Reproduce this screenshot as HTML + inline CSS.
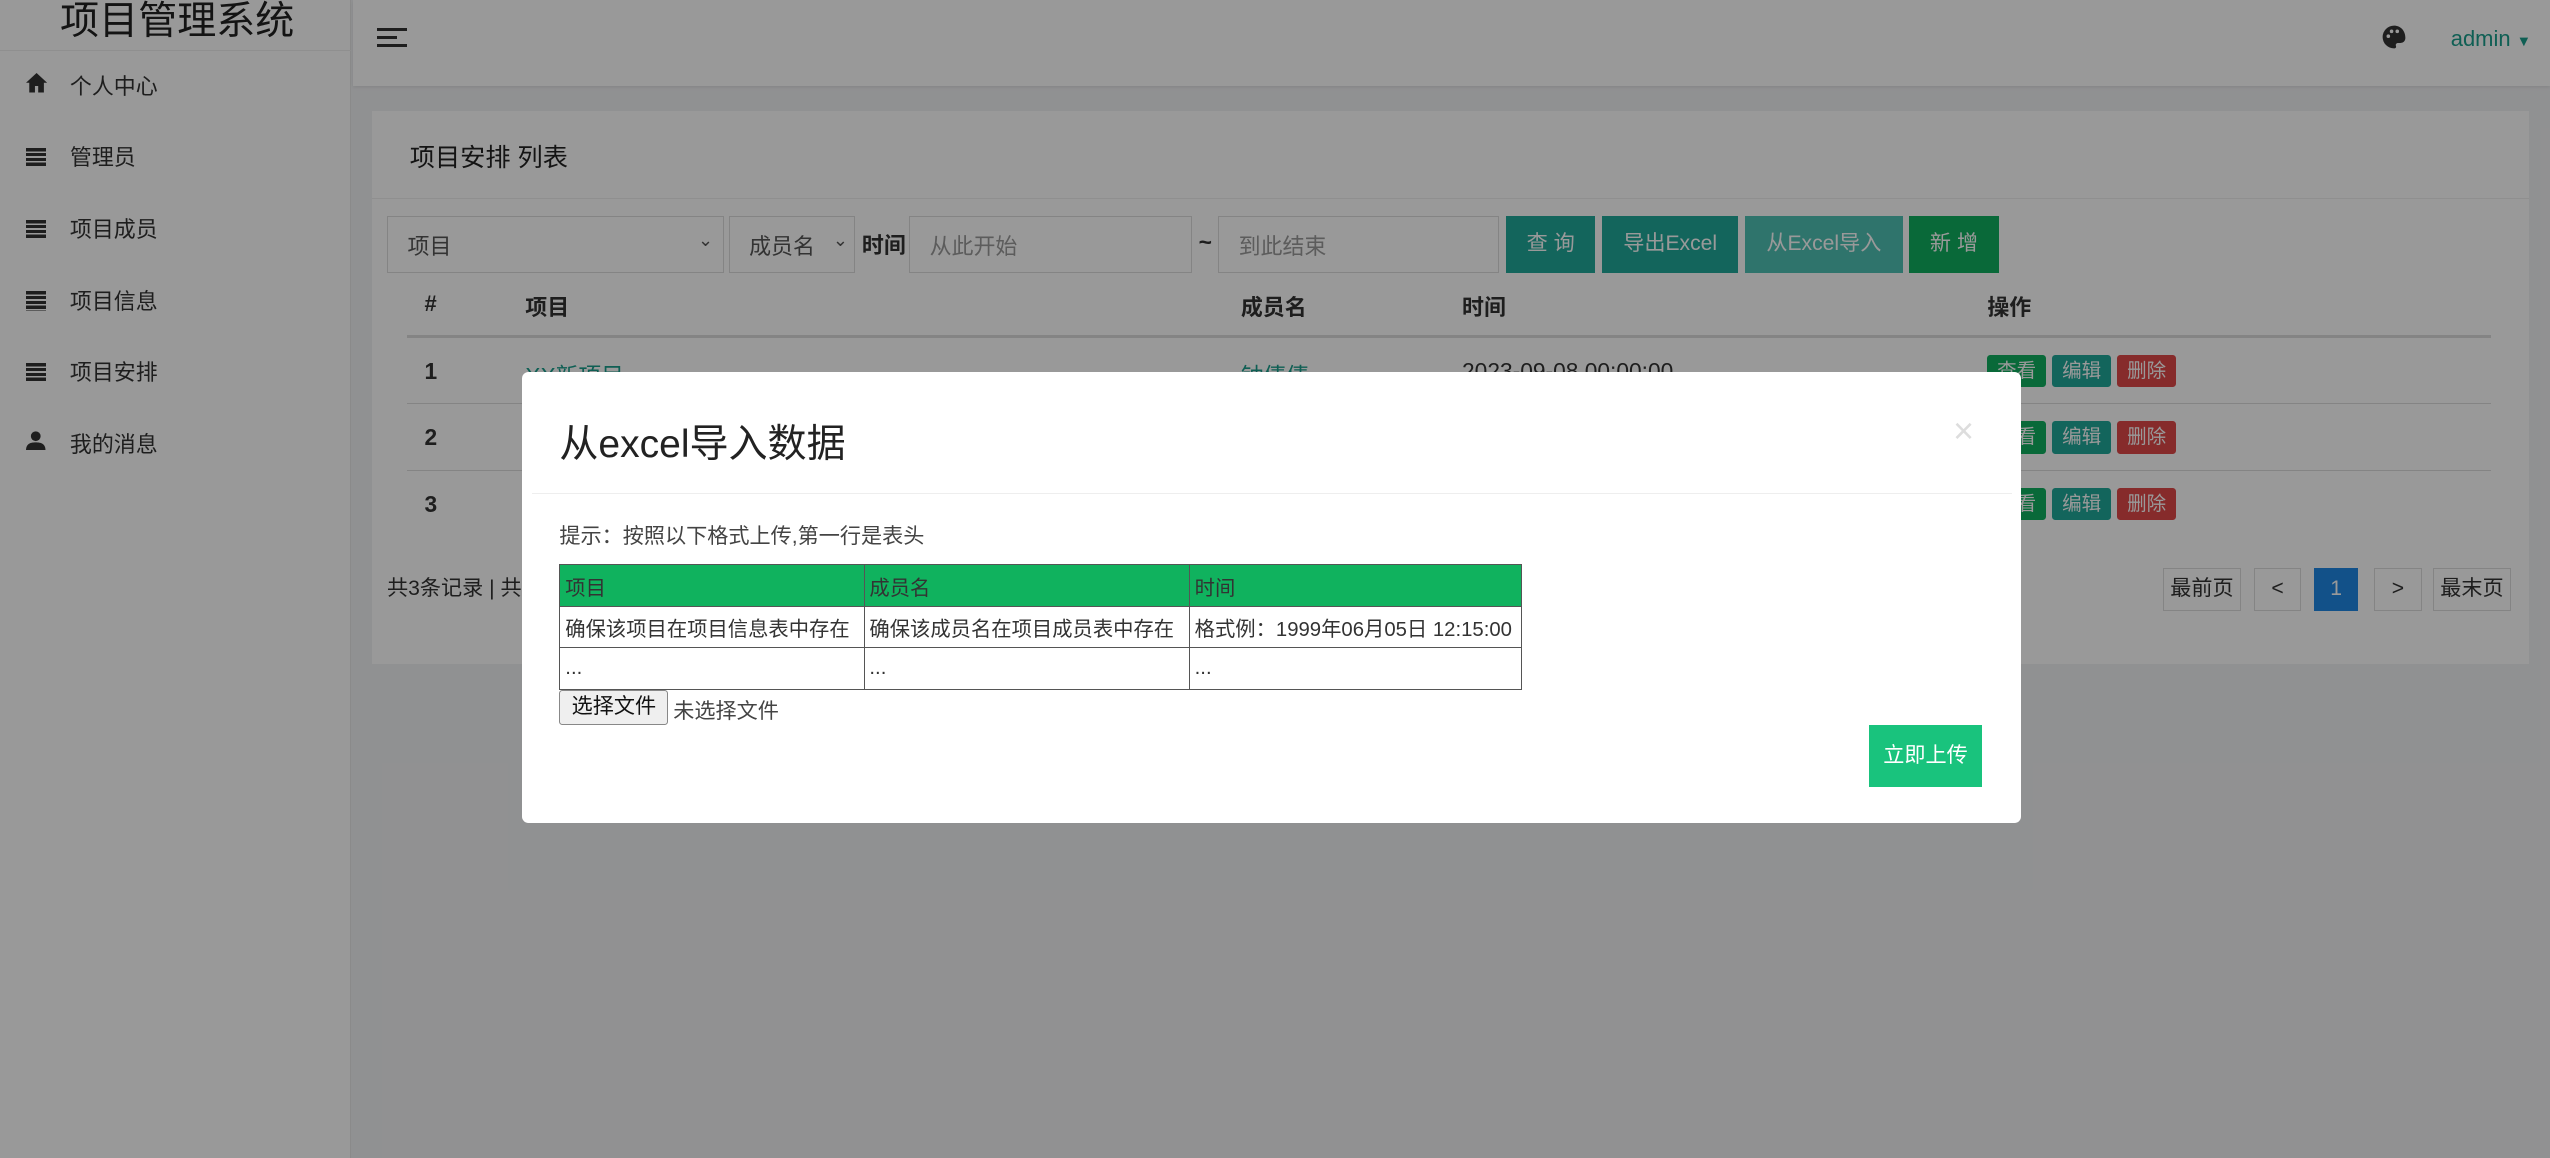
<!DOCTYPE html>
<html><head><meta charset="utf-8"><style>
*{box-sizing:border-box;margin:0;padding:0}
html,body{width:2550px;height:1158px;overflow:hidden;background:#f1f2f4}
#root{zoom:1.62628;width:1568px;height:712px;position:relative;font-family:"Liberation Sans","Noto Sans CJK SC",sans-serif;color:#333;font-size:14px}
.side{position:absolute;left:0;top:0;width:216px;height:712px;background:#fff;border-right:1px solid #e6e6e6}
.side .t{position:absolute;left:37px;top:-6px;font-size:24px;color:#222}
.side .hr{position:absolute;left:0;top:31px;width:216px;border-top:1px solid #eee}
.mi{position:absolute;left:0;width:216px;height:20px;font-size:13.5px}
.mi span{position:absolute;left:43px;top:0}
.mi i{position:absolute;left:16px;top:4px;width:12px;height:12px}
.lines{background:repeating-linear-gradient(#333 0 2px,transparent 2px 3px)}
.top{position:absolute;left:217px;top:0;width:1351px;height:53px;background:#fff;box-shadow:0 1px 2px rgba(0,0,0,.08)}
.card{position:absolute;left:229px;top:68px;width:1326px;height:340px;background:#fff}
.abs{position:absolute}
.inp{position:absolute;border:1px solid #ddd;height:35px;top:133px;color:#999;padding:8px 0 0 12px;font-size:13.5px;background:#fff}
.btn{position:absolute;top:133px;height:35px;color:#fff;font-size:13px;text-align:center;line-height:35px}
.th{position:absolute;top:179px;font-weight:bold;font-size:13.5px;color:#333}
.sb{position:absolute;width:36px;height:20px;color:#fff;font-size:12px;text-align:center;line-height:20px;border-radius:2px}
.pg{position:absolute;top:349px;height:27px;border:1px solid #ddd;font-size:13px;text-align:center;line-height:25px;background:#fff}
.ov{position:absolute;left:0;top:0;width:1568px;height:712px;background:rgba(0,0,0,.4)}
.modal{position:absolute;left:321px;top:229px;width:922px;height:277px;background:#fff;border-radius:4px}
table{border-collapse:collapse;position:absolute;left:23px;top:118px;font-size:12.5px;color:#333;table-layout:fixed;width:591px}
td{border:1px solid #555;height:25.5px;padding:0 3px;white-space:nowrap;overflow:hidden}
</style></head><body><div id="root">
<div class="side">
<div class="t">项目管理系统</div>
<div class="hr"></div>
<div class="mi" style="top:43px"><svg class="abs" style="left:16px;top:2px" width="13" height="12" viewBox="0 0 13 12"><path d="M6.5 0L0 6h2v6h3.5V8h2v4H11V6h2z" fill="#333"/></svg><span>个人中心</span></div>
<div class="mi" style="top:87px"><i class="lines"></i><span>管理员</span></div>
<div class="mi" style="top:131px"><i class="lines"></i><span>项目成员</span></div>
<div class="mi" style="top:175px"><i class="lines"></i><span>项目信息</span></div>
<div class="mi" style="top:219px"><i class="lines"></i><span>项目安排</span></div>
<div class="mi" style="top:263px"><svg class="abs" style="left:16px;top:2px" width="12" height="12" viewBox="0 0 12 12"><circle cx="6" cy="3.2" r="3" fill="#333"/><path d="M0 12c0-4 2.5-5 6-5s6 1 6 5z" fill="#333"/></svg><span>我的消息</span></div>
</div>
<div class="top">
<div class="abs" style="left:15px;top:17px;width:18px;height:12px;border-top:2px solid #333;border-bottom:2px solid #333"><div style="margin-top:3px;width:12px;border-top:2px solid #333"></div></div>
<svg class="abs" style="left:1247px;top:15px" width="16" height="16" viewBox="0 0 16 16"><path d="M8 1a7 7 0 000 14c1 0 1.5-.6 1.2-1.5-.4-1 .3-1.8 1.3-1.8H12a3 3 0 003-3C15 4 12 1 8 1z" fill="#333"/><circle cx="4.5" cy="7.5" r="1.1" fill="#fff"/><circle cx="6.5" cy="4.5" r="1.1" fill="#fff"/><circle cx="10" cy="4.5" r="1.1" fill="#fff"/></svg>
<div class="abs" style="left:1290px;top:16px;color:#1a9e8c;font-size:13.5px">admin <span style="font-size:9px">▼</span></div>
</div>
<div class="card">
<div class="abs" style="left:23px;top:17px;font-size:15.5px;color:#222">项目安排 列表</div>
<div class="abs" style="left:0;top:54px;width:1326px;border-top:1px solid #eee"></div>
</div>
<div class="inp" style="left:238px;width:207px;color:#555">项目<span class="abs" style="right:6px;top:8px;font-size:11px">⌄</span></div>
<div class="inp" style="left:448px;width:78px;color:#555">成员名<span class="abs" style="right:4px;top:8px;font-size:11px">⌄</span></div>
<div class="abs" style="left:530px;top:141px;font-weight:bold;font-size:13.5px">时间</div>
<div class="inp" style="left:559px;width:174px">从此开始</div>
<div class="abs" style="left:737px;top:141px;font-weight:bold">~</div>
<div class="inp" style="left:749px;width:173px">到此结束</div>
<div class="btn" style="left:926px;width:55px;background:#21a89a">查 询</div>
<div class="btn" style="left:985px;width:84px;background:#21a89a">导出Excel</div>
<div class="btn" style="left:1073px;width:97px;background:#4fc1b5">从Excel导入</div>
<div class="btn" style="left:1174px;width:55px;background:#0fb05f">新 增</div>
<div class="th" style="left:261px">#</div><div class="th" style="left:323px">项目</div><div class="th" style="left:763px">成员名</div><div class="th" style="left:899px">时间</div><div class="th" style="left:1222px">操作</div>
<div class="abs" style="left:250px;top:206px;width:1282px;border-top:2px solid #ddd"></div>
<div class="abs" style="left:250px;top:248px;width:1282px;border-top:1px solid #ddd"></div>
<div class="abs" style="left:250px;top:289px;width:1282px;border-top:1px solid #ddd"></div>
<div class="abs" style="left:261px;top:220px;font-weight:bold">1</div>
<div class="abs" style="left:261px;top:261px;font-weight:bold">2</div>
<div class="abs" style="left:261px;top:302px;font-weight:bold">3</div>
<div class="abs" style="left:323px;top:220px;color:#1a9e8c">XX新项目</div>
<div class="abs" style="left:763px;top:220px;color:#1a9e8c">钟倩倩</div>
<div class="abs" style="left:899px;top:220px">2023-09-08 00:00:00</div>
<div class="sb" style="left:1222px;top:218px;background:#0fb05f">查看</div><div class="sb" style="left:1262px;top:218px;background:#21a89a">编辑</div><div class="sb" style="left:1302px;top:218px;background:#e04848">删除</div>
<div class="sb" style="left:1222px;top:259px;background:#0fb05f">查看</div><div class="sb" style="left:1262px;top:259px;background:#21a89a">编辑</div><div class="sb" style="left:1302px;top:259px;background:#e04848">删除</div>
<div class="sb" style="left:1222px;top:300px;background:#0fb05f">查看</div><div class="sb" style="left:1262px;top:300px;background:#21a89a">编辑</div><div class="sb" style="left:1302px;top:300px;background:#e04848">删除</div>
<div class="abs" style="left:238px;top:351px;font-size:13px">共3条记录 | 共1页</div>
<div class="pg" style="left:1330px;width:48px">最前页</div>
<div class="pg" style="left:1386px;width:29px">&lt;</div>
<div class="pg" style="left:1423px;width:27px;background:#1e88e5;color:#fff;border-color:#1e88e5">1</div>
<div class="pg" style="left:1460px;width:29px">&gt;</div>
<div class="pg" style="left:1496px;width:48px">最末页</div>
<div class="ov"></div>
<div class="modal">
<div class="abs" style="left:23px;top:25px;font-size:24px;color:#222">从excel导入数据</div>
<div class="abs" style="left:880px;top:24px;font-size:22px;color:#ddd">×</div>
<div class="abs" style="left:6px;top:74px;width:910px;border-top:1px solid #eee"></div>
<div class="abs" style="left:23px;top:90px;font-size:13px;color:#444">提示：按照以下格式上传,第一行是表头</div>
<table>
<colgroup><col style="width:187px"><col style="width:200px"><col style="width:204px"></colgroup>
<tr style="background:#10b25e"><td>项目</td><td>成员名</td><td>时间</td></tr>
<tr><td>确保该项目在项目信息表中存在</td><td>确保该成员名在项目成员表中存在</td><td>格式例：1999年06月05日 12:15:00</td></tr>
<tr><td>...</td><td>...</td><td>...</td></tr>
</table>
<div class="abs" style="left:23px;top:195px;width:67px;height:22px;border:1px solid #888;border-radius:2px;background:#efefef;font-size:13px;text-align:center;line-height:20px;color:#111">选择文件</div>
<div class="abs" style="left:93px;top:198px;font-size:13px;color:#444">未选择文件</div>
<div class="abs" style="left:828px;top:217px;width:70px;height:38px;background:#19c37d;color:#fff;font-size:13px;text-align:center;line-height:38px">立即上传</div>
</div>
</div></body></html>
